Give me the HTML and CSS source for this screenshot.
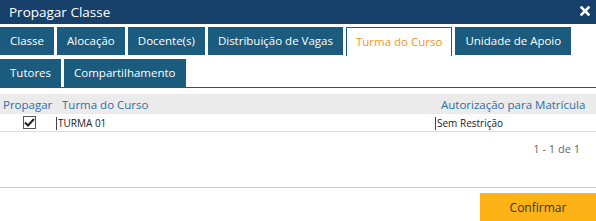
FILE: index.html
```html
<!DOCTYPE html>
<html lang="pt">

<head>
    <meta charset="UTF-8">
    <title>Propagar Classe</title>
    <link rel="stylesheet" href="styles.css">
</head>

<body>
    <div class="dialog">
        <div class="titlebar">
            <span>Propagar Classe</span>
            <svg class="close" width="10" height="10" viewBox="0 0 10 10">
                <path d="M1.5 1.5 L8.5 8.5 M8.5 1.5 L1.5 8.5" stroke="#fff" stroke-width="2.6" stroke-linecap="square"/>
            </svg>
        </div>

        <ul class="tabs">
            <li>Classe</li>
            <li>Alocação</li>
            <li>Docente(s)</li>
            <li>Distribuição de Vagas</li>
            <li class="active">Turma do Curso</li>
            <li>Unidade de Apoio</li>
            <li>Tutores</li>
            <li>Compartilhamento</li>
        </ul>

        <table class="grid">
            <thead>
                <tr>
                    <th class="col-check">Propagar</th>
                    <th class="col-turma">Turma do Curso</th>
                    <th class="col-auth">Autorização para Matrícula</th>
                </tr>
            </thead>
            <tbody>
                <tr>
                    <td class="col-check"><span class="checkbox"><svg width="11" height="9" viewBox="0 0 11 9"><path d="M1 4.5 L4 7.5 L10 1" fill="none" stroke="#222" stroke-width="2"/></svg></span></td>
                    <td><span class="cell">TURMA 01</span></td>
                    <td><span class="cell">Sem Restrição</span></td>
                </tr>
            </tbody>
        </table>

        <div class="pager">1 - 1 de 1</div>

        <div class="footer">
            <button class="confirm">Confirmar</button>
        </div>
    </div>
</body>

</html>
```

FILE: styles.css
```css
body {
    margin: 0;
    font-family: "Open Sans", "Noto Sans", sans-serif;
    background: #fff;
}

.dialog {
    width: 596px;
}

.titlebar {
    height: 24px;
    background-color: #17406a;
    color: #fff;
    font-size: 13.5px;
    line-height: 24px;
    padding: 0 6px 0 9px;
    display: flex;
    justify-content: space-between;
    align-items: center;
}

.close {
    margin-top: -3px;
}

.tabs {
    list-style: none;
    margin: 3px 0 0 0;
    padding: 0;
    display: flex;
    flex-wrap: wrap;
    gap: 3px;
    border-bottom: 1px solid #1a5b7e;
}

.tabs li {
    height: 28px;
    line-height: 28px;
    padding: 0 10px;
    background-color: #1a5b7e;
    color: #fff;
    font-size: 11.5px;
}

.tabs li.active {
    background-color: #fff;
    color: #f7941d;
    border: 1px solid #1a5b7e;
    border-bottom: none;
    height: 28px;
    line-height: 27px;
    padding: 0 9px;
}

.grid {
    width: 100%;
    margin-top: 6px;
    border-collapse: collapse;
}

.grid th {
    background-color: #ebebeb;
    color: #2b6fa8;
    font-weight: normal;
    font-size: 11.5px;
    text-align: left;
    height: 20px;
    padding: 0 0 0 6px;
}

.grid th.col-check {
    width: 53px;
    padding-left: 3px;
}

.grid th.col-turma {
    width: 373px;
}

.grid td {
    height: 17px;
    padding: 0;
    font-size: 10px;
    color: #222;
    border-bottom: 1px solid #ddd;
}

.grid td.col-check {
    text-align: center;
}

.cell {
    display: inline-block;
    border-left: 1px solid #444;
    padding-left: 1px;
    line-height: 13px;
    vertical-align: middle;
}

.checkbox {
    display: inline-block;
    width: 11px;
    height: 11px;
    border: 1px solid #555;
    vertical-align: middle;
    position: relative;
    top: -1px;
    left: 1px;
}

.checkbox svg {
    display: block;
    margin: 1px 0 0 0;
}

.pager {
    text-align: right;
    padding: 9px 16px 0 0;
    height: 46px;
    font-size: 11px;
    color: #666;
}

.footer {
    border-top: 1px solid #ccc;
    padding-top: 5px;
    display: flex;
    justify-content: flex-end;
}

.confirm {
    width: 116px;
    height: 28px;
    border: none;
    background-color: #fdb315;
    color: #333;
    font-family: "Open Sans", "Noto Sans", sans-serif;
    font-size: 12px;
    cursor: pointer;
}
```
